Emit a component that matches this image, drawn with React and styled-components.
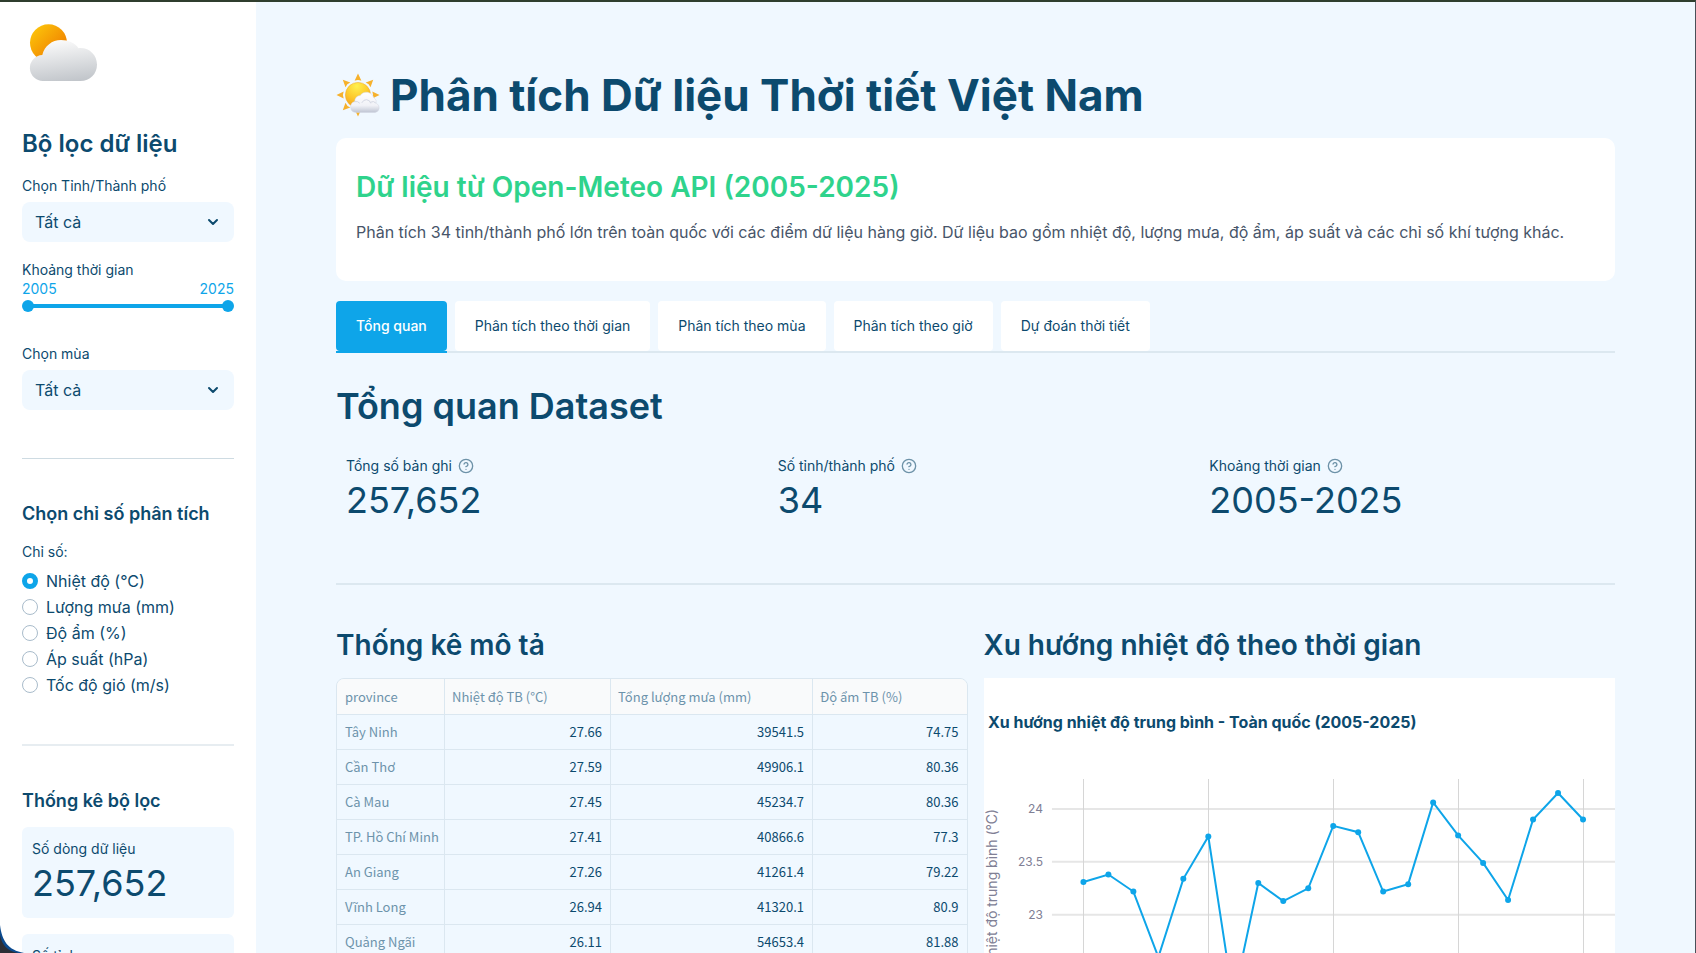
import React, { useState } from 'react';
import styled, { createGlobalStyle } from 'styled-components';

const GlobalStyle = createGlobalStyle`
  * {
    box-sizing: border-box;
  }
  body {
    margin: 0;
    background: #f0f8ff;
    color: #0c4a6e;
    font-family: Inter, 'Open Sans', sans-serif;
    font-size: 16px;
    line-height: 26px;
  }
  h1, h2, h3, p {
    margin: 0;
  }
`;

const Frame = styled.div`
  position: relative;
  display: flex;
  height: 100vh;
  overflow: hidden;
  border-top: 2px solid #2f3e2e;
  border-right: 1px solid #4a5058;
`;

const Corner = styled.svg`
  position: absolute;
  left: 0;
  bottom: 0;
`;

const Sidebar = styled.aside`
  flex: 0 0 256px;
  padding: 13px 22px;
  overflow: hidden;
  background: #ffffff;
`;

const Logo = styled.svg`
  display: block;
  width: 80px;
  height: 80px;
  margin-bottom: 33px;
`;

const SideTitle = styled.h2`
  font-size: 24px;
  line-height: 32px;
  font-weight: 600;
`;

const SideHeading = styled.h3`
  font-size: 18px;
  line-height: 24px;
  font-weight: 600;
`;

const Field = styled.div`
  display: flex;
  flex-direction: column;
  gap: 4px;
  margin-top: ${(props) => props.$top}px;
`;

const Label = styled.label`
  font-size: 14px;
  line-height: 24px;
`;

const SelectBox = styled.div`
  position: relative;
  display: grid;
  align-items: center;

  svg {
    position: absolute;
    right: 14px;
    pointer-events: none;
  }
`;

const Select = styled.select`
  appearance: none;
  width: 100%;
  height: 40px;
  padding: 0 36px 0 13px;
  border: 0;
  border-radius: 8px;
  background: #f0f8ff;
  color: inherit;
  font: inherit;
`;

const RangeField = styled.fieldset`
  margin: 16px 0 0;
  padding: 0;
  border: 0;
  min-width: 0;
  font-size: 14px;
`;

const RangeLegend = styled.legend`
  padding: 0;
  line-height: 24px;
`;

const RangeValues = styled.div`
  display: flex;
  justify-content: space-between;
  color: #0ea5e9;
  line-height: 14px;
`;

const Track = styled.div`
  position: relative;
  height: 12px;
  margin-top: 4px;
  background: linear-gradient(#0ea5e9, #0ea5e9) center / calc(100% - 12px) 4px no-repeat;
`;

const Range = styled.input`
  position: absolute;
  inset: 0;
  width: 100%;
  height: 12px;
  margin: 0;
  appearance: none;
  background: none;
  pointer-events: none;

  &::-webkit-slider-thumb {
    appearance: none;
    width: 12px;
    height: 12px;
    border-radius: 50%;
    background: #0ea5e9;
    pointer-events: auto;
  }
`;

const SideRule = styled.hr`
  height: ${(props) => props.$thick}px;
  margin: ${(props) => (props.$thick > 1 ? 46 : 48)}px 0 43px;
  border: 0;
  background: ${(props) => (props.$thick > 1 ? '#e7edf1' : '#cedbe2')};
`;

const RadioGroup = styled.fieldset`
  margin: 14px 0 0;
  padding: 0;
  border: 0;
`;

const RadioLegend = styled.legend`
  margin-bottom: 4px;
  padding: 0;
  font-size: 14px;
  line-height: 24px;
`;

const RadioRow = styled.label`
  display: flex;
  align-items: center;
  gap: 8px;
`;

const Radio = styled.input`
  appearance: none;
  width: 16px;
  height: 16px;
  margin: 0;
  border: 1px solid #a9bccb;
  border-radius: 50%;
  background: #ffffff;

  &:checked {
    border: 5px solid #0ea5e9;
  }
`;

const StatCard = styled.div`
  height: 91px;
  margin-top: 14px;
  padding: 10px;
  border-radius: 6px;
  background: #f0f8ff;

  & + & {
    margin-top: 16px;
  }
`;

const MetricLabel = styled.div`
  display: flex;
  align-items: center;
  gap: 6px;
  font-size: 14px;
  line-height: 24px;
`;

const MetricValue = styled.div`
  font-size: 36px;
  line-height: 44px;
`;

const Main = styled.main`
  flex: 1;
  min-width: 0;
  padding: 66px 80px 0;
`;

const Title = styled.h1`
  display: flex;
  align-items: center;
  gap: 10px;
  font-size: 44px;
  line-height: 54px;
  font-weight: 700;
`;

const InfoCard = styled.section`
  margin-top: 16px;
  padding: 31px 20px 36px;
  border-radius: 10px;
  background: #ffffff;
`;

const InfoTitle = styled.h3`
  color: #2fd38c;
  font-size: 28px;
  line-height: 36px;
  font-weight: 600;
`;

const InfoText = styled.p`
  margin-top: 14px;
  color: #475569;
`;

const Tabs = styled.div`
  display: flex;
  gap: 8px;
  margin-top: 20px;
  border-bottom: 2px solid #dce8f0;
`;

const Tab = styled.button`
  position: relative;
  height: 50px;
  padding: 0 20px;
  border: 0;
  border-radius: 4px;
  background: ${(props) => (props.$active ? '#0ea5e9' : '#ffffff')};
  color: ${(props) => (props.$active ? '#ffffff' : 'inherit')};
  font: inherit;
  font-size: 14px;
  font-weight: ${(props) => (props.$active ? 500 : 400)};

  &::after {
    content: '';
    position: absolute;
    left: 0;
    right: 0;
    bottom: -2px;
    height: 2px;
    background: ${(props) => (props.$active ? '#0ea5e9' : 'none')};
  }
`;

const SectionTitle = styled.h2`
  margin-top: 31px;
  font-size: 36px;
  line-height: 44px;
  font-weight: 600;
`;

const Metrics = styled.div`
  display: grid;
  grid-template-columns: repeat(3, 1fr);
  gap: 16px;
  margin-top: 26px;
`;

const Metric = styled.div`
  padding: 0 10px;
`;

const Rule = styled.hr`
  height: 2px;
  margin: 61px 0 42px;
  border: 0;
  background: #dce8f0;
`;

const Columns = styled.div`
  display: grid;
  grid-template-columns: repeat(2, minmax(0, 1fr));
  gap: 16px;
`;

const ColumnTitle = styled.h3`
  margin-bottom: 15px;
  font-size: 28px;
  line-height: 36px;
  font-weight: 600;
`;

const TableWrap = styled.div`
  overflow: hidden;
  border: 1px solid #dbe7f0;
  border-radius: 8px;
`;

const Table = styled.table`
  width: 100%;
  border-collapse: separate;
  border-spacing: 0;
  table-layout: fixed;
  font-family: 'Noto Sans CJK SC', 'Open Sans', sans-serif;
  font-size: 13px;
  line-height: 20px;
  white-space: nowrap;

  th,
  td {
    height: 35px;
    padding: 0 8px;
    border-right: 1px solid #dbe7f0;
    border-bottom: 1px solid #dbe7f0;
    text-align: right;
    font-weight: 400;
  }
  thead th {
    height: 36px;
    padding: 0 7px;
    background: #f9fafb;
  }
  th {
    color: #6d93ab;
    text-align: left;
  }
  thead th:first-child {
    padding: 0 8px;
  }
  tr > :last-child {
    border-right: 0;
  }
`;

const ChartCard = styled.div`
  height: 450px;
  background: #ffffff;

  svg {
    display: block;
    width: 100%;
    height: 450px;
  }
`;

const provinces = [
  ['Tây Ninh', '27.66', '39541.5', '74.75'],
  ['Cần Thơ', '27.59', '49906.1', '80.36'],
  ['Cà Mau', '27.45', '45234.7', '80.36'],
  ['TP. Hồ Chí Minh', '27.41', '40866.6', '77.3'],
  ['An Giang', '27.26', '41261.4', '79.22'],
  ['Vĩnh Long', '26.94', '41320.1', '80.9'],
  ['Quảng Ngãi', '26.11', '54653.4', '81.88'],
];

const tabs = [
  'Tổng quan',
  'Phân tích theo thời gian',
  'Phân tích theo mùa',
  'Phân tích theo giờ',
  'Dự đoán thời tiết',
];

const indicators = [
  'Nhiệt độ (°C)',
  'Lượng mưa (mm)',
  'Độ ẩm (%)',
  'Áp suất (hPa)',
  'Tốc độ gió (m/s)',
];

const metrics = [
  ['Tổng số bản ghi', '257,652'],
  ['Số tỉnh/thành phố', '34'],
  ['Khoảng thời gian', '2005-2025'],
];

// yearly mean temperature, 2005-2025
const temps = [
  23.31, 23.38, 23.22, 22.6, 23.34, 23.74, 22.2, 23.3, 23.13, 23.25, 23.84,
  23.78, 23.22, 23.29, 24.06, 23.75, 23.49, 23.14, 23.9, 24.15, 23.9,
];

const xOf = (i) => 99.5 + i * 25;
const yOf = (t) => Math.round((131 + (24 - t) * 106) * 10) / 10;

const Chevron = () => (
  <svg width="14" height="14" viewBox="0 0 14 14" aria-hidden="true">
    <path
      d="M3 5l4 4 4-4"
      fill="none"
      stroke="#0c4a6e"
      strokeWidth="2"
      strokeLinecap="round"
      strokeLinejoin="round"
    />
  </svg>
);

const HelpIcon = () => (
  <svg width="16" height="16" viewBox="0 0 24 24" fill="none" stroke="#6d92a8" strokeWidth="2" strokeLinecap="round" aria-hidden="true">
    <circle cx="12" cy="12" r="10" />
    <path d="M9.09 9a3 3 0 0 1 5.83 1c0 2-3 3-3 3" />
    <path d="M12 17h.01" />
  </svg>
);

const CloudLogo = () => (
  <Logo viewBox="0 0 80 80" aria-hidden="true">
    <defs>
      <linearGradient id="logoSun" x1="0.1" y1="0.1" x2="0.8" y2="0.8">
        <stop offset="0" stopColor="#fcc30a" />
        <stop offset="1" stopColor="#f08000" />
      </linearGradient>
      <linearGradient id="logoCloud" x1="0.4" y1="0" x2="0.6" y2="1">
        <stop offset="0" stopColor="#fbfbfb" />
        <stop offset="1" stopColor="#c2c6cb" />
      </linearGradient>
    </defs>
    <circle cx="26.5" cy="27.8" r="18.5" fill="url(#logoSun)" />
    <path
      d="M21.500 66a13 13 0 0 1-1.200-26C22.500 31 30 25 39 25c7.500 0 14 3 17.500 8.200C67 32 75 40 75 49.500S68 66 58.500 66z"
      fill="url(#logoCloud)"
    />
  </Logo>
);

const rays = [0, 45, 90, 135, 180, 225, 270, 315];

const SunCloud = () => (
  <svg width="44" height="44" viewBox="0 0 44 44" aria-hidden="true">
    <defs>
      <radialGradient id="sunBody" cx="0.45" cy="0.15" r="0.95">
        <stop offset="0" stopColor="#fff04f" />
        <stop offset="0.5" stopColor="#fdc92b" />
        <stop offset="1" stopColor="#f2951a" />
      </radialGradient>
      <linearGradient id="cloudBody" x1="0" y1="0" x2="0" y2="1">
        <stop offset="0" stopColor="#ffffff" />
        <stop offset="0.65" stopColor="#f1f2f7" />
        <stop offset="1" stopColor="#bfc5d3" />
      </linearGradient>
    </defs>
    {rays.map((a) => (
      <path key={a} d="M22 0.5l3.400 7.200q-3.400-1.600-6.800 0z" fill="#f6b12c" transform={`rotate(${a} 22 22)`} />
    ))}
    <circle cx="22" cy="22" r="12.6" fill="url(#sunBody)" stroke="#f0a92a" strokeWidth="0.5" />
    <path
      d="M20 39.500a5.600 5.600 0 0 1-1.200-11 5.500 5.500 0 0 1 5.400-6 7.600 7.600 0 0 1 13.600 2.300 5 5 0 0 1 2.400 5.500 4.800 4.800 0 0 1-1.200 9.200z"
      fill="url(#cloudBody)"
      stroke="#d3d7e2"
      strokeWidth="0.5"
    />
    <path
      d="M18.800 28.600q3-.8 4.800 1.400M26 29.500q1.500-3 4.500-2.800 3.500.2 4.200 3.300M35 29q2.500-1.500 4.600.8"
      fill="none"
      stroke="#cfd4e0"
      strokeWidth="0.9"
      strokeLinecap="round"
    />
  </svg>
);

function TrendChart() {
  const line = temps.map((t, i) => `${xOf(i)},${yOf(t)}`).join(' ');
  return (
    <svg viewBox="0 0 632 450" preserveAspectRatio="xMinYMin meet" fontFamily="Inter, sans-serif">
      <text x="4" y="50" fontSize="16" fontWeight="700" fill="#0c4a6e">
        Xu hướng nhiệt độ trung bình - Toàn quốc (2005-2025)
      </text>
      {[24, 23.5, 23].map((t) => (
        <g key={t}>
          <path d={`M68 ${yOf(t)}H632`} stroke="#e6e6e6" strokeWidth="2" />
          <text x="59" y={yOf(t) + 4} fontSize="12" textAnchor="end" fill="#808095">
            {t}
          </text>
        </g>
      ))}
      {[0, 5, 10, 15, 20].map((i) => (
        <path key={i} d={`M${xOf(i)} 101V400`} stroke="#d6d6d6" shapeRendering="crispEdges" />
      ))}
      <text transform="translate(13 131) rotate(-90)" fontSize="14" textAnchor="end" fill="#808095">
        Nhiệt độ trung bình (°C)
      </text>
      <polyline points={line} fill="none" stroke="#0ea5e9" strokeWidth="2" />
      {temps.map((t, i) => (
        <circle key={i} cx={xOf(i)} cy={yOf(t)} r="3" fill="#0ea5e9" />
      ))}
    </svg>
  );
}

export default function App() {
  const [tab, setTab] = useState(0);
  const [indicator, setIndicator] = useState(0);
  const [from, setFrom] = useState(2005);
  const [to, setTo] = useState(2025);

  return (
    <Frame>
      <GlobalStyle />
      <Sidebar>
        <CloudLogo />
        <SideTitle>Bộ lọc dữ liệu</SideTitle>
        <Field $top={14}>
          <Label htmlFor="province">Chọn Tỉnh/Thành phố</Label>
          <SelectBox>
            <Select id="province">
              <option>Tất cả</option>
            </Select>
            <Chevron />
          </SelectBox>
        </Field>
        <RangeField>
          <RangeLegend>Khoảng thời gian</RangeLegend>
          <RangeValues>
            <span>{from}</span>
            <span>{to}</span>
          </RangeValues>
          <Track>
            <Range type="range" aria-label="Từ năm" min="2005" max="2025" value={from} onChange={(e) => setFrom(Number(e.target.value))} />
            <Range type="range" aria-label="Đến năm" min="2005" max="2025" value={to} onChange={(e) => setTo(Number(e.target.value))} />
          </Track>
        </RangeField>
        <Field $top={30}>
          <Label htmlFor="season">Chọn mùa</Label>
          <SelectBox>
            <Select id="season">
              <option>Tất cả</option>
            </Select>
            <Chevron />
          </SelectBox>
        </Field>
        <SideRule $thick={1} />
        <SideHeading>Chọn chỉ số phân tích</SideHeading>
        <RadioGroup>
          <RadioLegend>Chỉ số:</RadioLegend>
          {indicators.map((name, i) => (
            <RadioRow key={name}>
              <Radio type="radio" name="indicator" checked={indicator === i} onChange={() => setIndicator(i)} />
              {name}
            </RadioRow>
          ))}
        </RadioGroup>
        <SideRule $thick={2} />
        <SideHeading>Thống kê bộ lọc</SideHeading>
        <StatCard>
          <MetricLabel>Số dòng dữ liệu</MetricLabel>
          <MetricValue>257,652</MetricValue>
        </StatCard>
        <StatCard>
          <MetricLabel>Số tỉnh</MetricLabel>
        </StatCard>
      </Sidebar>

      <Main>
        <Title>
          <SunCloud />
          Phân tích Dữ liệu Thời tiết Việt Nam
        </Title>
        <InfoCard>
          <InfoTitle>Dữ liệu từ Open-Meteo API (2005-2025)</InfoTitle>
          <InfoText>
            Phân tích 34 tỉnh/thành phố lớn trên toàn quốc với các điểm dữ liệu hàng giờ. Dữ liệu bao gồm nhiệt độ, lượng mưa, độ ẩm, áp suất và các chỉ số khí tượng khác.
          </InfoText>
        </InfoCard>
        <Tabs role="tablist">
          {tabs.map((name, i) => (
            <Tab key={name} role="tab" aria-selected={tab === i} $active={tab === i} onClick={() => setTab(i)}>
              {name}
            </Tab>
          ))}
        </Tabs>

        <SectionTitle>Tổng quan Dataset</SectionTitle>
        <Metrics>
          {metrics.map(([name, value]) => (
            <Metric key={name}>
              <MetricLabel>
                {name}
                <HelpIcon />
              </MetricLabel>
              <MetricValue>{value}</MetricValue>
            </Metric>
          ))}
        </Metrics>
        <Rule />

        <Columns>
          <div>
            <ColumnTitle>Thống kê mô tả</ColumnTitle>
            <TableWrap>
              <Table>
                <colgroup>
                  <col width="108" />
                  <col width="166" />
                  <col width="202" />
                  <col />
                </colgroup>
                <thead>
                  <tr>
                    <th scope="col">province</th>
                    <th scope="col">Nhiệt độ TB (°C)</th>
                    <th scope="col">Tổng lượng mưa (mm)</th>
                    <th scope="col">Độ ẩm TB (%)</th>
                  </tr>
                </thead>
                <tbody>
                  {provinces.map(([name, ...values]) => (
                    <tr key={name}>
                      <th scope="row">{name}</th>
                      {values.map((value, i) => (
                        <td key={i}>{value}</td>
                      ))}
                    </tr>
                  ))}
                </tbody>
              </Table>
            </TableWrap>
          </div>
          <div>
            <ColumnTitle>Xu hướng nhiệt độ theo thời gian</ColumnTitle>
            <ChartCard>
              <TrendChart />
            </ChartCard>
          </div>
        </Columns>
      </Main>
      <Corner width="24" height="32" viewBox="0 0 24 32" aria-hidden="true">
        <path d="M0 4C2 20 8 29 24 32H0z" fill="#0b4a8f" />
        <path d="M0 14C2 24 7 30 18 32H0z" fill="#2c2e36" />
      </Corner>
    </Frame>
  );
}
